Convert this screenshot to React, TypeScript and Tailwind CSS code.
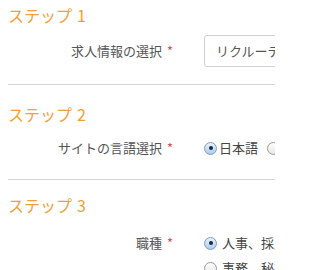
import React from "react";

const font = {
  fontFamily: '"Noto Sans CJK JP", "Noto Sans", sans-serif',
};

function Radio({ checked }: { checked?: boolean }) {
  return checked ? (
    <span className="flex h-[13px] w-[13px] shrink-0 items-center justify-center rounded-full border border-[#7f9db9] bg-gradient-to-b from-[#e8f2fc] to-[#a9cdf0]">
      <span className="h-[4px] w-[4px] rounded-full bg-[#1b2a3a]" />
    </span>
  ) : (
    <span className="h-[13px] w-[13px] shrink-0 rounded-full border border-[#9a9a9a] bg-gradient-to-b from-[#ffffff] to-[#e6e6e6]" />
  );
}

function Step({ n }: { n: number }) {
  return (
    <h2 className="text-[16px] leading-[22px] text-[#f2a033]">
      ステップ<span className="ml-[5px]">{n}</span>
    </h2>
  );
}

function Label({ text }: { text: string }) {
  return (
    <div className="w-[165px] shrink-0 text-right text-[13px] text-[#555]">
      {text}
      <span className="ml-[5px] text-[#d9534f]">*</span>
    </div>
  );
}

export default function App() {
  return (
    <div className="h-[270px] w-[275px] overflow-hidden bg-white pl-[8px] pt-[4px]" style={font}>
      <Step n={1} />
      <div className="mt-[9px] flex items-center">
        <Label text="求人情報の選択" />
        <div className="ml-[31px] flex h-[32px] w-[200px] shrink-0 items-center overflow-hidden whitespace-nowrap rounded-[3px] border border-[#d0d0d0] pl-[11px] text-[13px] text-[#555]">
          リクルーティング
        </div>
      </div>
      <hr className="mt-[17px] border-[#d3d3d3]" />

      <div className="mt-[18px]">
        <Step n={2} />
      </div>
      <div className="mt-[7px] flex h-[32px] items-center">
        <Label text="サイトの言語選択" />
        <div className="ml-[31px] flex shrink-0 items-center whitespace-nowrap text-[13px] text-[#444]">
          <Radio checked />
          <span className="ml-[2px]">日本語</span>
          <span className="ml-[9px] flex shrink-0">
            <Radio />
          </span>
          <span className="ml-[2px]">英語</span>
        </div>
      </div>
      <hr className="mt-[15px] border-[#d3d3d3]" />

      <div className="mt-[14px]">
        <Step n={3} />
      </div>
      <div className="mt-[11px] flex items-start">
        <div className="flex h-[32px] items-center">
          <Label text="職種" />
        </div>
        <div className="ml-[31px] flex shrink-0 flex-col whitespace-nowrap text-[13px] text-[#444]">
          <div className="flex h-[32px] items-center">
            <Radio checked />
            <span className="ml-[5px]">人事、採用</span>
          </div>
          <div className="flex h-[18px] items-center">
            <Radio />
            <span className="ml-[5px]">事務、秘書</span>
          </div>
        </div>
      </div>
    </div>
  );
}
